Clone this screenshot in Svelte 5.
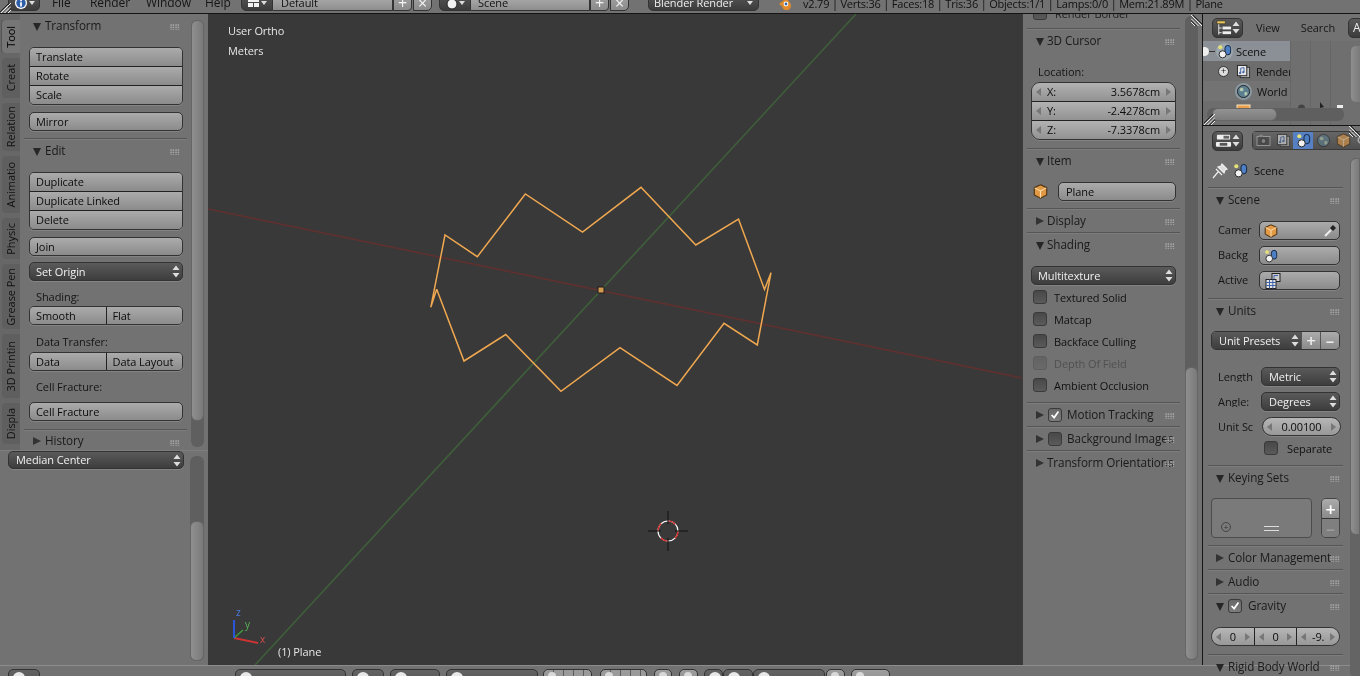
<script>
  const tabs = [["Tool",33,true],["Creat",40],["Relation",48],["Animatio",57],["Physic",41],["Grease Pen",65],["3D Printin",64],["Displa",41]];
  const mesh = "436.7,289.3 464,361 505.7,334.5 561,391.3 620,347.7 677,385.5 724,323.3 757.3,345 771,272.7 764.5,289.5 738.5,219 695.8,245 641,187.3 582.5,232 525.3,194 477.3,256.7 445,235 430.8,307.3 436.7,289.3";
  const botWidgets = [[8,32,"mid"],[235,111,"mid"],[352,32,"mid"],[390,50,"mid"],[446,92,"mid"],[543,49,"cells"],[600,47,"cells"],[654,18,"lite"],[679,19,"lite"],[704,19,"mid"],[723,30,"mid"],[753,72,"mid"],[826,19,"lite"],[851,39,"lite"]];
  const toolRows = ["Textured Solid","Matcap","Backface Culling","Depth Of Field","Ambient Occlusion"];
</script>

{#snippet updown()}
  <svg class="ud" viewBox="0 0 8 13" width="8" height="13"><path d="M4 0.5 7.5 5H.5Z M4 12.5 .5 8h7Z" fill="#ddd"/></svg>
{/snippet}
{#snippet cube(s=14)}
  <svg width={s} height={s} viewBox="0 0 14 14"><path d="M7 .8 12.8 3.4V10.2L7 13.2 1.2 10.2V3.4Z" fill="#e39a45" stroke="#4a2f12"/><path d="M1.6 3.6 7 6.4 12.4 3.6M7 6.4V12.8" stroke="#fbdcae" fill="none"/></svg>
{/snippet}
{#snippet scene(s=16)}
  <svg width={s} height={s} viewBox="0 0 16 16"><circle cx="3.5" cy="3.5" r="2.2" fill="#e6e27a"/><rect x="8.5" y="1.5" width="6" height="10" rx="3" fill="#4d7fc4" stroke="#12233f"/><circle cx="6" cy="11" r="3.8" fill="#f2f2f2" stroke="#222"/></svg>
{/snippet}
{#snippet world(s=16)}
  <svg width={s} height={s} viewBox="0 0 16 16"><circle cx="8" cy="8" r="6.5" fill="#5c7f8f" stroke="#222"/><path d="M4 5c2-2 4-1 4 1s-3 2-4 1zM9 9c2-1 4 0 3 2s-3 2-3 0z" fill="#b5c8b0"/></svg>
{/snippet}
{#snippet doc(s=16)}
  <svg width={s} height={s} viewBox="0 0 16 16"><rect x="4.5" y="3.5" width="10" height="11" fill="#bbb" stroke="#333"/><rect x="1.5" y="1.5" width="10" height="11" fill="#e6e6e6" stroke="#222"/><path d="M5 9.5V4.5L8.5 3.8V8.5" stroke="#3f63a8" fill="none"/><circle cx="4.3" cy="9.6" r="1.2" fill="#3f63a8"/><circle cx="7.8" cy="8.7" r="1.2" fill="#3f63a8"/></svg>
{/snippet}
{#snippet layerIcon()}
  <svg width="18" height="18" viewBox="0 0 18 18"><rect x="8" y="1.5" width="8" height="8" fill="#ccc" stroke="#222"/><path d="M10 7.5V3.5h4" stroke="#3f63a8" fill="none"/><rect x="2" y="7.5" width="10" height="9" fill="#e4e4e4" stroke="#222"/><path d="M2 10.5h10M2 13.5h10M5.5 7.5v9M8.8 7.5v9" stroke="#3f63a8"/></svg>
{/snippet}
{#snippet oneIcon(kind)}
  {#if kind==="layout"}
    <svg width="13" height="13" viewBox="0 0 13 13"><path d="M1 2h11v4H1zM1 7h5v4H1zM7 7h5v4H7z" fill="#f2f2f2"/></svg>
  {:else if kind==="i"}
    <svg width="14" height="14" viewBox="0 0 16 16"><circle cx="8" cy="8" r="7" fill="#f0f0f0"/><circle cx="8" cy="8" r="5.4" fill="#2f5ea8"/><path d="M7 4h2v2H7zM7 7h2v5H7z" fill="#fff"/></svg>
  {:else if kind==="outl"}
    <svg width="18" height="18" viewBox="0 0 18 18"><path d="M2 1.5h9v3H2z" fill="#ecc75a" stroke="#222" stroke-width=".6"/><path d="M4 5v11M4 9h3M4 14h3" stroke="#eee"/><rect x="8" y="7.5" width="9" height="3" fill="#eee"/><rect x="8" y="12.5" width="9" height="3" fill="#eee"/></svg>
  {:else if kind==="prop"}
    <svg width="18" height="18" viewBox="0 0 18 18"><rect x="2" y="2.5" width="14" height="5" rx="1" fill="#eee"/><rect x="9" y="3.5" width="6" height="3" fill="#666"/><rect x="1" y="10" width="16" height="5" rx="1" fill="#eee"/><path d="M5 11h8v3H5z" fill="#555"/></svg>
  {:else if kind==="ball"}
    <svg width="14" height="14" viewBox="0 0 14 14"><circle cx="7" cy="8" r="5" fill="#f2f2f2" stroke="#222"/></svg>
  {/if}
{/snippet}
{#snippet grip()}<i class="grip"></i>{/snippet}
{#snippet hd(t, open=true, chk=null)}
  <div class="hd" class:shut={!open}>
    <i class={open?"tri-d":"tri-r"}></i>
    {#if chk!==null}<span class="chk" class:on={chk}>{#if chk}<svg viewBox="0 0 14 14" width="12" height="12"><path d="M3 7l3 3 5-7" stroke="#fff" stroke-width="2" fill="none"/></svg>{/if}</span>{/if}
    <span class="hdt">{t}</span>
    {@render grip()}
  </div>
{/snippet}
{#snippet hatch(cls)}
  <svg class="hatch {cls}" width="11" height="11" viewBox="0 0 11 11"><path d="M11 0 0 11M11 3.5 3.5 11M11 7 7 11" stroke="#eee" stroke-width="1"/><path d="M9 0 0 9M11 5.5 5.5 11" stroke="#222" stroke-width="1"/></svg>
{/snippet}

<div class="app">
  <header class="top">
    {@render hatch("hl")}
    <div class="wg dark w-info">{@render oneIcon("i")}<em class="dn"></em></div>
    <nav class="menu"><span>File</span><span>Render</span><span>Window</span><span>Help</span></nav>
    <div class="wg dark w-lay">{@render oneIcon("layout")}<em class="dn"></em></div>
    <div class="fld w-name">Default</div>
    <div class="sq w-add">+</div><div class="sq w-x">×</div>
    <div class="wg dark w-sc">{@render oneIcon("ball")}<em class="dn"></em></div>
    <div class="fld w-name2">Scene</div>
    <div class="sq w-add">+</div><div class="sq w-x">×</div>
    <div class="wg dark w-eng"><span>Blender Render</span><em class="dn"></em></div>
    <svg class="logo" width="14" height="14" viewBox="0 0 14 14"><path d="M1 8 6 4 4 3h5l3 4a4.5 4.5 0 1 1-8 3L2 9z" fill="#e08a2c"/><circle cx="8" cy="8" r="2.4" fill="#fff"/><circle cx="8" cy="8" r="1.4" fill="#3566a8"/></svg>
    <div class="stats">v2.79 | Verts:36 | Faces:18 | Tris:36 | Objects:1/1 | Lamps:0/0 | Mem:21.89M | Plane</div>
  </header>

  <div class="main">
    <aside class="left">
      <div class="upper">
        <div class="tabs">
          {#each tabs as [t,h,on]}
            <div class="tab" class:on style="height:{h}px"><span>{t}</span></div>
          {/each}
        </div>
        <div class="tcol">
          {@render hd("Transform")}
          <div class="grp g1">
            <div class="b">Translate</div><div class="b">Rotate</div><div class="b">Scale</div>
          </div>
          <div class="b solo m7">Mirror</div>
          <div class="sep m7"></div>
          {@render hd("Edit")}
          <div class="grp g1">
            <div class="b">Duplicate</div><div class="b">Duplicate Linked</div><div class="b">Delete</div>
          </div>
          <div class="b solo m7">Join</div>
          <div class="b solo drop m6">Set Origin{@render updown()}</div>
          <div class="lab l1">Shading:</div>
          <div class="split"><div class="b">Smooth</div><div class="b">Flat</div></div>
          <div class="lab l2">Data Transfer:</div>
          <div class="split"><div class="b">Data</div><div class="b">Data Layout</div></div>
          <div class="lab l3">Cell Fracture:</div>
          <div class="b solo">Cell Fracture</div>
          <div class="sep m8"></div>
          {@render hd("History", false)}
        </div>
        <div class="trough t-up"><div class="thumb"></div></div>
      </div>
      <div class="lower">
        <div class="b solo drop median">Median Center{@render updown()}</div>
        <div class="trough t-low"><div class="thumb"></div></div>
      </div>
    </aside>

    <section class="view">
      <div class="vt t1">User Ortho</div>
      <div class="vt t2">Meters</div>
      <div class="vt t3">(1) Plane</div>
      <svg class="canvas" width="814" height="651" viewBox="208 14 814 651">
        <line x1="208" y1="209" x2="1022" y2="378" stroke="#5f3030" stroke-width="1.6"/>
        <line x1="255" y1="665" x2="856" y2="14" stroke="#3e5f3a" stroke-width="1.6"/>
        <polyline points={mesh} fill="none" stroke="#f0a850" stroke-width="1.5" stroke-linejoin="miter"/>
        <rect x="598" y="287" width="6" height="6" fill="#d39a50" stroke="#1c1c1c" stroke-width="1"/>
        <circle cx="668" cy="531" r="10" fill="none" stroke="#fff" stroke-width="1.2"/>
        <circle cx="668" cy="531" r="10" fill="none" stroke="#d22" stroke-width="1.2" stroke-dasharray="8 7.7"/>
        <path d="M648 531h13M675 531h13M668 511v13M668 538v13" stroke="#111" stroke-width="1"/>
        <path d="M234 638 258 643" stroke="#c33" stroke-width="2"/>
        <path d="M234 638 243 630" stroke="#3c9a3c" stroke-width="1.5"/>
        <path d="M234 638V620" stroke="#2b55d8" stroke-width="2"/>
        <text x="236" y="616" class="ax" fill="#4a7ae0">z</text>
        <text x="245" y="628" class="ax" fill="#59b659">y</text>
        <text x="260" y="643" class="ax" fill="#d84b4b">x</text>
      </svg>
    </section>

    <aside class="npanel">
      <div class="nbody">
        <div class="cut"><span class="chk"></span><span>Render Border</span></div>
        <div class="sep m5"></div>
        {@render hd("3D Cursor")}
        <div class="lab nlab">Location:</div>
        <div class="grp num3">
          <div class="b num"><i class="al"></i><span>X:</span><b>3.5678cm</b><i class="ar"></i></div>
          <div class="b num"><i class="al"></i><span>Y:</span><b>-2.4278cm</b><i class="ar"></i></div>
          <div class="b num"><i class="al"></i><span>Z:</span><b>-7.3378cm</b><i class="ar"></i></div>
        </div>
        <div class="sep m8"></div>
        {@render hd("Item")}
        <div class="itemrow">{@render cube(15)}<div class="b solo tf">Plane</div></div>
        <div class="sep m8"></div>
        {@render hd("Display", false)}
        <div class="sep"></div>
        {@render hd("Shading")}
        <div class="b solo drop ndrop">Multitexture{@render updown()}</div>
        <div class="checks">
          {#each toolRows as t}
            <div class="cr" class:off={t==="Depth Of Field"}><span class="chk"></span><span>{t}</span></div>
          {/each}
        </div>
        <div class="sep m6"></div>
        {@render hd("Motion Tracking", false, true)}
        <div class="sep"></div>
        {@render hd("Background Images", false, false)}
        <div class="sep"></div>
        {@render hd("Transform Orientations", false)}
      </div>
      <div class="trough t-n"><div class="thumb"></div></div>
      {@render hatch("hn")}
    </aside>

    <div class="right">
      <section class="outliner">
        <div class="ohead">
          <div class="wg dark w-ed">{@render oneIcon("outl")}{@render updown()}</div>
          <span class="om m1">View</span><span class="om m2">Search</span>
          <div class="wg dark w-a">A</div>
        </div>
        <div class="olist">
          <div class="orow sel"><span class="lead"></span><i class="tl"></i><span class="hal">{@render scene(15)}</span><span class="oname">Scene</span></div>
          <div class="orow alt"><span class="plus">+</span><span class="ic">{@render doc(15)}</span><span class="oname">Render</span></div>
          <div class="orow"><span class="nop"></span><span class="ic hal2">{@render world(15)}</span><span class="oname">World</span></div>
          <div class="orow alt"><span class="nop"></span><span class="ic cam"><svg width="15" height="10" viewBox="0 0 15 10"><rect x="1" y="1" width="13" height="9" fill="#e8a04e" stroke="#fbe2b8"/></svg></span></div>
          <svg class="rest" width="50" height="6" viewBox="0 0 50 6"><path d="M5 6a3.5 3.5 0 0 1 7 0z" fill="#444"/><path d="M27 0v6l4-1z" fill="#222"/><path d="M44 3h9v3h-9z" fill="#eee"/></svg>
          <div class="hscroll"><div class="hthumb"></div></div>
          <div class="vscroll"></div>
          {@render hatch("ho")}
        </div>
      </section>
      <section class="props">
        <div class="phead">
          <div class="wg dark w-ed">{@render oneIcon("prop")}{@render updown()}</div>
          <div class="ptabs">
            <div class="pt dim"><svg width="15" height="15" viewBox="0 0 15 15"><rect x="1" y="3.5" width="13" height="9" fill="#444" stroke="#bbb"/><circle cx="7.5" cy="8" r="2.6" fill="#999" stroke="#222"/><rect x="3" y="1.8" width="4" height="2" fill="#999"/></svg></div>
            <div class="pt dim">{@render doc(15)}</div>
            <div class="pt act">{@render scene(15)}</div>
            <div class="pt dim">{@render world(15)}</div>
            <div class="pt dim">{@render cube(15)}</div>
            <div class="pt dim"><svg width="15" height="15" viewBox="0 0 15 15"><rect x="2" y="3" width="10" height="6" rx="3" transform="rotate(-35 7 6)" fill="none" stroke="#ddd" stroke-width="1.5"/></svg></div>
          </div>
        </div>
        <div class="pbody">
          <div class="pcol">
            <div class="ctx">
              <svg width="18" height="18" viewBox="0 0 18 18"><path d="M2 16 7 10M5 7l6 6M7 5l6 6 1-3 2-1-5-5-1 2z" fill="#ddd" stroke="#eee" stroke-width="1.2"/></svg>
              {@render scene(15)}<span>Scene</span>
            </div>
            <div class="sep pzero"></div>
            {@render hd("Scene")}
            <div class="frow f0"><span class="rl">Camer</span><div class="b solo ff">{@render cube(14)}<svg class="drp" width="14" height="14" viewBox="0 0 14 14"><path d="M2 12 8 6" stroke="#eee" stroke-width="2"/><path d="M7 4l3 3 3-3-3-3z" fill="#222"/></svg></div></div>
            <div class="frow f1"><span class="rl">Backg</span><div class="b solo ff">{@render scene(14)}</div></div>
            <div class="frow f1"><span class="rl">Active</span><div class="b solo ff">{@render layerIcon()}</div></div>
            <div class="sep m8"></div>
            {@render hd("Units")}
            <div class="presets"><div class="b drop up">Unit Presets{@render updown()}</div><div class="b pm">+</div><div class="b pm">–</div></div>
            <div class="frow f17 low"><span class="rl">Length</span><div class="b solo drop dd">Metric{@render updown()}</div></div>
            <div class="frow f1 low"><span class="rl">Angle:</span><div class="b solo drop dd">Degrees{@render updown()}</div></div>
            <div class="frow f1 low"><span class="rl">Unit Sc</span><div class="b solo pill"><i class="al"></i><b>0.00100</b><i class="ar"></i></div></div>
            <div class="sepcheck"><span class="chk"></span><span>Separate</span></div>
            <div class="sep m7"></div>
            {@render hd("Keying Sets")}
            <div class="keying">
              <div class="klist"><span class="kp">+</span><span class="kb"></span></div>
              <div class="kside"><div class="b kk">+</div><div class="b kk dim2">–</div></div>
            </div>
            <div class="sep m7"></div>
            {@render hd("Color Management", false)}
            <div class="sep"></div>
            {@render hd("Audio", false)}
            <div class="sep"></div>
            {@render hd("Gravity", true, true)}
            <div class="gravity">
              <div class="b"><i class="al"></i><b>0</b><i class="ar"></i></div>
              <div class="b"><i class="al"></i><b>0</b><i class="ar"></i></div>
              <div class="b"><i class="al"></i><b>-9.</b><i class="ar"></i></div>
            </div>
            <div class="sep m8"></div>
            {@render hd("Rigid Body World")}
          </div>
          <div class="trough t-p"><div class="thumb"></div></div>
        </div>
        {@render hatch("hp")}
      </section>
    </div>
  </div>

  <footer class="bot">
    <div class="botrow">
      {#each botWidgets as [x,w,k],i}
        <div class="bw {k}" style="margin-left:{i===0?x:x-botWidgets[i-1][0]-botWidgets[i-1][1]}px;width:{w}px"><i class="blob"></i></div>
      {/each}
    </div>
  </footer>
</div>

<style>
  :global(body){margin:0;background:#727272}
  .app{width:1360px;height:676px;display:flex;flex-direction:column;overflow:hidden;background:#727272;color:#111;font:11px/1 "Open Sans","Noto Sans",sans-serif;letter-spacing:-.08px;position:relative;filter:blur(.3px)}
  .top{height:14px;flex:none;box-sizing:border-box;border-bottom:1px solid #141414;display:flex;align-items:flex-end;overflow:hidden;position:relative}
  .top>*{flex:none;margin-bottom:2px;height:20px;box-sizing:border-box}
  .wg{display:flex;align-items:center;border:1px solid #333;border-radius:5px;box-sizing:border-box}
  .top .wg,.top .fld,.top .sq{padding-top:3px}
  .dark{background:linear-gradient(#5a5a5a,#3c3c3c);color:#eee}
  .dn{display:inline-block;width:0;height:0;border:3px solid transparent;border-top:4px solid #ddd;margin:3px 0 0 auto}
  .w-info{width:32px;margin-left:8px;padding:0 4px 0 5px}
  .menu{display:flex;margin-left:12px;width:189px;align-items:center;gap:0;color:#151515;font-size:12px;margin-bottom:0!important}
  .menu span:nth-child(1){width:38px}.menu span:nth-child(2){width:56px}.menu span:nth-child(3){width:59px}
  .w-lay{width:32px;border-radius:5px 0 0 5px;padding:0 5px}
  .fld{background:linear-gradient(#b7b7b7,#8e8e8e);border:1px solid #333;border-left:0;display:flex;align-items:center;padding-left:8px;font-size:11px}
  .w-name{width:120px}.w-name2{width:119px;padding-left:7px}
  .sq{width:19px;display:flex;align-items:center;justify-content:center;background:linear-gradient(#a8a8a8,#8a8a8a);border:1px solid #333;border-radius:0 0 4px 0;font-size:16px;color:#f4f4f4}
  .w-x{margin-right:7px;margin-left:1px;border-radius:0 0 5px 0}
  .w-sc{width:32px;border-radius:5px 0 0 5px;padding:0 5px}
  .w-eng{width:111px;margin-left:12px;padding:0 5px 0 5px}
  .logo{margin-left:19px;height:14px!important;margin-bottom:3px!important}
  .stats{margin-left:11px;margin-bottom:0!important;color:#111;display:flex;align-items:center;font-size:11px;letter-spacing:-.2px}

  .main{height:651px;flex:none;display:flex}
  .left{width:208px;flex:none;display:flex;flex-direction:column}
  .upper{height:436px;display:flex;flex:none}
  .tabs{width:20px;padding-top:6px;flex:none;display:flex;flex-direction:column;gap:5px;box-sizing:border-box;align-items:flex-end;background:#676767}
  .tab{width:18px;background:#5f5f5f;border-radius:4px 0 0 4px;display:flex;align-items:center;justify-content:center;box-sizing:border-box;color:#111}
  .tab.on{background:#767676;box-shadow:-1px 0 0 #555;color:#000}
  .tab span{writing-mode:vertical-rl;transform:rotate(180deg);white-space:nowrap;margin-left:-2px}
  .tcol{width:170px;flex:none}
  .hd{height:24px;display:flex;align-items:center;padding-left:13px;position:relative;font-size:11.7px;color:#1a1a1a;white-space:nowrap;box-sizing:border-box}
  .hd.shut{height:23px}
  .tcol .hd.shut{height:21px}
  .hdt{margin-left:4px}
  .npanel .hdt{margin-left:3px}
  .tri-d,.tri-r{display:block;width:0;height:0;flex:none}
  .tri-d{border:4px solid transparent;border-top:8px solid #262626;border-bottom:0;margin-top:1px}
  .tri-r{border:4px solid transparent;border-left:8px solid #333;border-right:0}
  .grip{position:absolute;right:10px;top:10px;width:10px;height:6px;background:radial-gradient(circle at 1px 1px,#b4b4b4 .55px,transparent .9px) 0 0/2.5px 2.5px}
  .b{height:19px;box-sizing:border-box;display:flex;align-items:center;padding-left:6px;background:linear-gradient(#ababab,#8b8b8b);white-space:nowrap;color:#0c0c0c;overflow:hidden}
  .grp{border:1px solid #333;border-radius:5px;overflow:hidden;box-sizing:border-box;height:58px;display:flex;flex-direction:column;box-shadow:0 1px 0 #848484}
  .grp .b{flex:1;height:auto;padding-bottom:1px}
  .grp .b+.b{border-top:1px solid #222}
  .g1{margin:9px 7px 0 9px}
  .solo{border:1px solid #333;border-radius:5px;margin-left:9px;margin-right:7px;box-shadow:0 1px 0 #848484}
  .drop{background:linear-gradient(#5a5a5a,#3d3d3d);color:#f0f0f0;position:relative}
  .ud{margin-left:auto;margin-right:2px;flex:none}
  .m5{margin-top:5px}.m6{margin-top:6px}.m7{margin-top:7px}.m8{margin-top:8px}
  .sep{height:1px;background:#555;margin-left:4px;margin-right:3px;box-shadow:0 1px 0 #7d7d7d}
  .lab{color:#151515;height:19px;display:flex;align-items:center;padding-left:16px;box-sizing:border-box}
  .l1{margin-top:6px}.l2{margin-top:7px;height:20px;padding-bottom:2px}.l3{margin-top:6px;height:20px;margin-bottom:5px;padding-bottom:2px}
  .split{display:flex;margin:0 7px 0 9px;border:1px solid #333;border-radius:5px;overflow:hidden;height:19px;box-sizing:border-box;box-shadow:0 1px 0 #848484}
  .split .b{flex:1;height:auto;width:50%}
  .split .b+.b{border-left:1px solid #222}
  .trough{flex:none;background:#5f5f5f;border-radius:6px;position:relative;box-sizing:border-box}
  .thumb{background:linear-gradient(90deg,#8f8f8f,#7a7a7a);border:1px solid #666;border-radius:6px;box-sizing:border-box;position:absolute;left:0;right:0}
  .t-up{width:13px;margin:6px 4px 0 1px;height:427px}
  .t-up .thumb{top:0;height:401px}
  .lower{flex:1;position:relative;display:flex;border-top:1px solid #7e7e7e}
  .median{margin:0 0 0 8px;width:176px;height:18px;padding-left:7px;padding-bottom:2px}
  .median .ud{margin-top:2px}
  .t-low{width:14px;margin:5px 4px 4px 6px;height:205px}
  .t-low .thumb{top:65px;bottom:0}

  .view{width:814px;flex:none;background:#393939;position:relative;overflow:hidden}
  .canvas{position:absolute;inset:0;display:block}
  .ax{font:10px "Open Sans",sans-serif}
  .vt{position:absolute;color:#e6e6e6;font-size:11px;z-index:1}
  .t1{left:20px;top:11px}.t2{left:20px;top:31px}.t3{left:70px;top:632px}

  .npanel{width:180px;flex:none;display:flex;position:relative;border-left:1px solid #3c3c3c;box-sizing:border-box;overflow:hidden}
  .nbody{width:162px;flex:none}
  .npanel .sep{margin-left:4px;margin-right:5px}
  .cut{height:20px;margin-top:-11px;display:flex;align-items:center;gap:8px;padding-left:10px;color:#222}
  .nlab{height:20px;margin-top:9px;padding-left:15px;padding-bottom:2px}
  .num3{margin:0 9px 0 8px;border-radius:9px}
  .num{position:relative;justify-content:space-between;padding:0 15px 1px 15px;background:linear-gradient(#b2b2b2,#929292)}
  .num b,.pill b,.gravity b{font-weight:400}
  .al,.ar{position:absolute;top:50%;margin-top:-4px;width:0;height:0;border:4px solid transparent}
  .al{left:4px;border-right:5px solid #777;border-left:0}
  .ar{right:4px;border-left:5px solid #777;border-right:0}
  .itemrow{display:flex;align-items:center;margin:9px 9px 0 10px;height:18px}
  .tf{flex:1;margin:0 0 0 10px;padding-left:7px;height:19px}
  .ndrop{margin:9px 9px 0 8px;height:19px;padding-left:6px}
  .checks{margin-top:1px}
  .cr{height:22px;display:flex;align-items:center;padding-left:10px;gap:7px}
  .chk{width:14px;height:14px;box-sizing:border-box;border:1px solid #3a3a3a;border-radius:3px;background:linear-gradient(#484848,#5a5a5a);display:flex;align-items:center;justify-content:center;flex:none}
  .chk.on{background:linear-gradient(#686868,#7d7d7d)}
  .cr.off{color:#505050}.cr.off .chk{opacity:.35}
  .hd .chk{margin-left:4px;margin-right:2px}
  .t-n{width:13px;margin:2px 0 5px 0;height:644px}
  .t-n .thumb{top:351px;bottom:0}

  .right{width:158px;flex:none;border-left:1px solid #151515;box-sizing:border-box;display:flex;flex-direction:column}
  .outliner{height:111px;flex:none;border-bottom:1px solid #151515;display:flex;flex-direction:column;position:relative;background:#6f6f6f}
  .ohead{height:27px;flex:none;display:flex;align-items:center;padding-left:9px;background:#727272;overflow:hidden}
  .w-ed{width:31px;height:20px;padding:0 0 0 2px;flex:none}
  .om{color:#171717}.m1{margin-left:13px}.m2{margin-left:21px}
  .w-a{margin-left:13px;width:30px;height:20px;flex:none;padding-left:4px;font-size:12px;border-radius:5px}
  .olist{flex:1;position:relative;overflow:hidden;background-image:linear-gradient(90deg,transparent 87px,#666 87px,#666 88px,transparent 88px,transparent 107px,#666 107px,#666 108px,transparent 108px,transparent 127px,#666 127px,#666 128px,transparent 128px)}
  .orow{height:20px;width:87px;display:flex;align-items:center;overflow:hidden;white-space:nowrap;color:#0f0f0f;font-size:11px;background:#737373}
  .orow.alt{background:#6d6d6d}
  .orow.sel{background:#8a9095}
  .lead{width:9px;height:9px;border-radius:50%;background:#eee;margin-left:-3px;flex:none}
  .tl{width:6px;height:1px;background:#333;flex:none}
  .hal{width:17px;height:17px;border-radius:50%;background:#9ca6ad;display:flex;align-items:center;justify-content:center;flex:none;margin-left:1px}
  .oname{margin-left:3px}
  .plus{width:9px;height:9px;border-radius:50%;background:#ddd;border:1px solid #333;color:#111;font-size:9px;line-height:8px;text-align:center;flex:none;margin-left:15px;box-sizing:content-box}
  .orow .oname{margin-left:5px}
  .orow.sel .oname{margin-left:3px}
  .nop{width:11px;flex:none;margin-left:15px}
  .ic{margin-left:7px;display:flex;flex:none}
  .cam{align-self:flex-start;margin-top:3px}
  .hal2{width:17px;height:17px;border-radius:50%;background:#8c9aa3;align-items:center;justify-content:center;margin-left:6px}
  .rest{position:absolute;left:90px;top:61px}
  .hscroll{position:absolute;left:4px;width:137px;top:67px;height:13px;background:#5f5f5f;border-radius:6px}
  .hthumb{position:absolute;left:5px;width:65px;top:0;bottom:0;background:linear-gradient(#929292,#7c7c7c);border:1px solid #666;border-radius:6px;box-sizing:border-box}
  .vscroll{position:absolute;right:0;width:9px;top:5px;height:56px;background:linear-gradient(90deg,#8f8f8f,#7a7a7a);border-radius:5px 0 0 5px}
  .props{flex:1;display:flex;flex-direction:column;position:relative}
  .phead{height:29px;display:flex;align-items:center;padding-left:9px;flex:none;overflow:hidden}
  .ptabs{display:flex;margin-left:9px;height:19px;border-radius:4px 0 0 4px;background:#565656;border:1px solid #3a3a3a;box-sizing:border-box;flex:none}
  .pt{width:20px;display:flex;align-items:center;justify-content:center;flex:none;background:linear-gradient(#666,#505050)}
  .pt.dim svg{opacity:.6}
  .pt.act{background:#5680c2}
  .pbody{display:flex;flex:1;min-height:0}
  .pcol{width:147px;flex:none}
  .pcol .sep{margin-left:5px;margin-right:7px}
  .ctx{height:32px;display:flex;align-items:center;padding:0 0 1px 8px;gap:4px;color:#111;box-sizing:border-box}
  .ctx span{margin-left:2px}
  .frow{display:flex;align-items:center;height:19px}
  .rl{width:41px;margin-left:15px;flex:none;color:#151515;overflow:hidden;white-space:nowrap;padding-bottom:2px}
  .low .rl{padding-bottom:0}
  .ff{flex:none;width:81px;margin:0;padding-left:4px;position:relative;height:19px}
  .drp{position:absolute;right:2px;top:2px}
  .f0{margin-top:9px}.f1{margin-top:6px}.f17{margin-top:17px}
  .presets{display:flex;margin:8px 10px 0 8px;height:19px;border:1px solid #333;border-radius:5px;overflow:hidden;box-sizing:border-box}
  .presets .b{height:auto}
  .up{width:89px;flex:none;padding-left:7px}
  .pm{flex:1;justify-content:center;padding:0;font-size:17px;color:#eee;font-weight:600;border-left:1px solid #555}
  .dd{width:79px;margin:0 0 0 2px;padding-left:7px;flex:none}
  .pill{width:79px;margin:0 0 0 3px;border-radius:10px;position:relative;background:linear-gradient(#b6b6b6,#989898);justify-content:center;padding:0;flex:none}
  .sepcheck{display:flex;align-items:center;gap:9px;height:20px;padding-left:61px;margin-top:2px}
  .keying{display:flex;margin:8px 10px 0 8px;height:40px;justify-content:space-between}
  .klist{width:101px;border:1px solid #4c4c4c;border-radius:4px;box-sizing:border-box;background:#7a7a7a;position:relative}
  .kp{position:absolute;left:9px;bottom:5px;width:8px;height:8px;border-radius:50%;border:1px solid #444;font-size:8px;line-height:8px;text-align:center;color:#333}
  .kb{position:absolute;left:52px;bottom:6px;width:15px;height:3px;border-top:1px solid #ddd;border-bottom:1px solid #ddd}
  .kside{width:19px;border:1px solid #444;border-radius:5px;overflow:hidden;display:flex;flex-direction:column;box-sizing:border-box}
  .kk{height:50%;justify-content:center;padding:0;color:#fff;font-size:18px;font-weight:600}
  .kk+.kk{border-top:1px solid #333}
  .dim2{color:#9c9c9c;background:#7f7f7f}
  .gravity{display:flex;margin:9px 10px 0 8px;height:19px;border:1px solid #333;border-radius:10px;overflow:hidden;box-sizing:border-box}
  .gravity .b{flex:1;height:auto;padding:0;justify-content:center;position:relative;background:linear-gradient(#b6b6b6,#989898)}
  .gravity .b+.b{border-left:1px solid #222}
  .t-p{width:10px;margin:3px 0 0 0;height:520px;border-radius:6px 0 0 6px;background:#646464}
  .t-p .thumb{top:0;height:377px;border-radius:6px 0 0 6px}

  .hatch{position:absolute;flex:none;z-index:3}
  .top .hatch{margin:0;height:11px}
  .hl{left:0;top:3px}
  .hn{right:0;top:1px;transform:scaleX(-1)}
  .ho{left:1px;bottom:0}
  .hp{right:0;top:0;transform:scaleX(-1)}

  .bot{height:11px;flex:none;border-top:1px solid #8c8c8c;box-sizing:border-box;overflow:hidden}
  .botrow{display:flex;padding-top:3px}
  .bw{height:20px;flex:none;border:1px solid #333;border-radius:5px;box-sizing:border-box;position:relative}
  .bw.mid{background:linear-gradient(#626262,#555)}
  .bw.lite{background:linear-gradient(#9d9d9d,#8b8b8b)}
  .bw.cells{background:repeating-linear-gradient(90deg,#9a9a9a 0 9px,#5c5c5c 9px 10px)}
  .blob{position:absolute;left:4px;top:2px;width:12px;height:12px;border-radius:50%;background:#e8e8e8;display:block}
  .bw.lite .blob,.bw.cells .blob{width:8px;height:8px;background:#d8d8d8}
</style>
